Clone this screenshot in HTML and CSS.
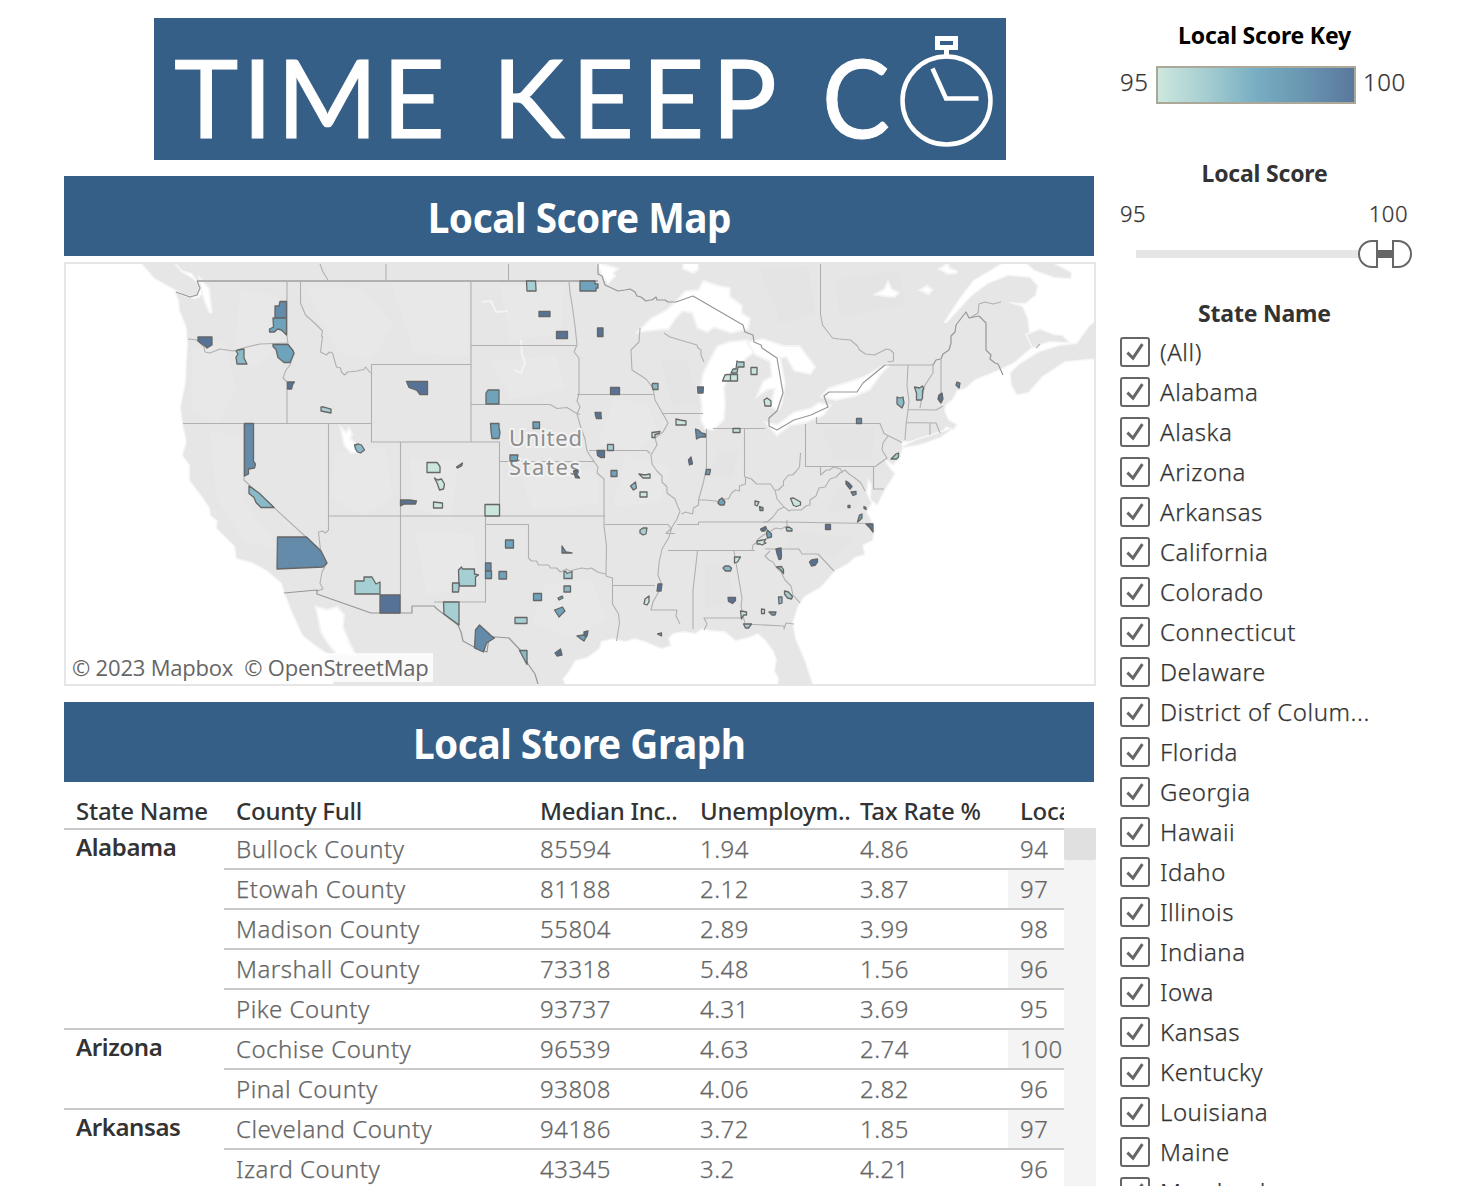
FILE: index.html
```html
<!DOCTYPE html>
<html lang="en">
<head>
<meta charset="utf-8">
<title>Time Keep Co – Local Scores</title>
<link rel="stylesheet" href="styles.css">
</head>
<body>
<svg class="defs" width="0" height="0" aria-hidden="true">
  <symbol id="check" viewBox="2 2 26 26"><path d="M7.400 15.600 L13 21.200 L22.400 7.200" fill="none" stroke="#666" stroke-width="3"/></symbol>
</svg>
<div class="page">
<main class="main">
  <header class="logo">
    <svg width="852" height="142" viewBox="154 18 852 142">
      <g class="logo-text">
        <text x="174" y="138" textLength="271" lengthAdjust="spacing">TIME</text>
        <text x="492" y="138" textLength="285" lengthAdjust="spacing">KEEP</text>
        <text x="822" y="138" textLength="68" lengthAdjust="spacingAndGlyphs">C</text>
      </g>
      <g fill="none" stroke="#fff">
        <circle cx="946.5" cy="100.500" r="44" stroke-width="4.500"/>
        <rect x="937.5" y="38.500" width="18" height="9" stroke-width="5"/>
        <path d="M946.500 48v7" stroke-width="5"/>
        <path d="M932.500 68.500L946 98.500h32.500" stroke-width="4.500"/>
      </g>
    </svg>
  </header>
  <h1 class="band"><span>Local Score Map</span></h1>
  <section class="map">
    <svg width="1028" height="420" viewBox="66 264 1028 420">
      <g class="land">
        <path d="M175 262L182 270L192 273L197 280L205 288L208 298L203 294L199 298L194 299L176 293L179 300L180 310L187 328L188 345L187 360L186 383L181 407L183 423L187 442L183 455L190 465L190 480L203 497L210 508L211 515L218 521L217 528L235 546L237 558L252 562L267 570L282 583L285 593L292 611L303 635L317 646L329 654L335 690H563L564 683L562 679L567 673L575 660L587 657L599 648L601 641L613 638L625 641L635 638L645 641L652 644L662 648L670 645L668 638L673 633L683 631L695 633L702 628L710 630L725 631L736 640L748 637L758 633L766 640L774 651L777 660L775 671L779 678L778 690H814L810 678L804 660L795 639L792 623L797 607L804 596L820 587L829 577L835 570L848 563L854 557L864 554L862 545L872 540L874 530L870 519L866 512L871 503L866 493L868 478L872 485L871 499L877 504L884 490L894 474L887 465L884 458L893 464L899 458L902 448L901 441L910 441L930 436L941 433L946 426L953 429L956 425L948 420L944 411L945 405L952 399L957 390L965 388L975 379L988 374L1000 369L1014 362L1033 346L1029 334L1027 318L1022 307L1007 302L1025 303L1035 295L1037 286L1030 278L1008 276L988 284L972 296L947 323L943 323L960 297L973 280L990 270L1003 262Z"/>
        <path d="M141 262H173L181 272L194 280L199 287L196 296L185 295L171 287L155 278Z"/>
        <path d="M1027 335L1040 330L1053 335L1062 336L1068 342L1050 341L1040 344L1033 347Z"/>
        <path d="M1011 373L1019 365L1040 352L1060 346L1077 344L1090 326L1096 322V358L1065 361L1042 376L1028 392L1017 394L1012 385Z"/>
        <path d="M1026 262H1050L1071 273L1070 278L1055 277L1035 270Z"/>
        <path d="M903 447L917 440L940 433L951 429L940 437L920 444Z"/>
      </g>
      <g class="relief">
        <path d="M240 288l38 9 3 43-27 29-20-18zM306 287l53 1 35 37-23 35-33-8zM192 350l32-9 12 49-16 31-28-8zM336 452l49-5 8 49-29 21-35-21zM391 281h77v75l-54-3zM210 430l40 11-7 58 35 49-33-5-29-45zM410 458l49 4-8 56-38-10zM500 285h64l-3 49-51 7zM490 361l66-5 9 33-54 10zM615 398l32 6 12 28-22 19-40-7zM520 475l78-5v34l-65 5zM415 530l59 5 5 56-53 3zM545 584l46-5 15 38-32 22-42-16zM626 455l45 13-12 34-46 5z"/>
        <path class="dark" d="M660 359l27 1 12 42-26 5zM718 451l20 2-6 24-23 1zM760 270l48-4 7 47-34 10zM835 280l65-10 5 35-65 13zM822 429l54-2-5 35-37-3zM839 487l22 4-4 18-31 3zM789 532l65 5-20 20-48-8zM705 565l24 2 5 36-29 5z"/>
      </g>
      <g class="water">
        <path d="M640 331L652 319L667 311L677 302L686 292L699 291L704 282L719 287L729 289L729 297L741 306L741 314L749 319L747 328L731 332L714 326L707 331L698 327L693 312L682 310L674 319L668 328L655 329Z"/>
        <path d="M747 341L729 343L718 347L709 364L704 374L701 392L703 406L702 420L706 428L713 429L723 419L724 404L723 387L728 376L738 365L746 357L755 350L748 346Z"/>
        <path d="M749 343L763 340L784 347L799 347L814 367L810 373L795 370L787 356L779 357L784 383L781 403L778 409L772 406L776 388L768 388L759 394L764 382L773 377L771 361L756 354Z"/>
        <path d="M768 424L777 426L795 413L812 409L819 404L829 406L823 414L804 422L790 424L777 434Z"/>
        <path d="M823 396L829 389L846 384L864 378L878 370L889 364L879 375L869 389L855 395L836 399Z"/>
        <path d="M201 281l7 8 3 24-4-8-4-12z"/>
        <path d="M317 608L327 611L337 608L343 615L342 627L349 644L354 654L337 653L329 643L322 632Z"/>
        <path d="M342 430l4 4 3-4 2 4-2 4 6 7 2 6-5 1-7-7z"/>
        <path d="M598 264l18 5-4 4 2 3-6 6-4-5zM684 264h13v5l-4 3-9-4zM941 269l6-4 2 4 8 3-9 1zM878 294l7-4 3-6 3 6 6 3-3 3-10-1zM922 290l5-3 4 3-3 3z"/>
      </g>
      <path class="rivers" d="M482 302l9-1 5 11 12-1M521 340l1 14 3 9-4 10-7-3"/>
      <g class="borders">
        <path d="M197 281H598" stroke-width="2"/>
        <path d="M386 264v17M508.500 264v17M320 264l3 8 5 8M287 281v55l1 8M188 339l9 1 7 7 1 5 5 1 10-4 13 2 14-4 13-3 28-1M288 344l6 9-4 12-4 5-3 8 4 4v41M183 423.500H371.500M300.500 281v22l5 12 9 8 8 8-1 5 1 1-2 15 6 3 3-3 3 1 4 14 4 1 1 4 3 3 3-3 10-1 3-1 3 0 2-3 5 6M371.500 364.500H471M371.500 364.500V442H499.500V516M471 281V442M471 345.500H577M471 404.500H550l7 4 10-1 8 5 5 2M569 281l1 12 2 11 3 22 2 19-3 7 5 6v36l-2 7 3 6-3 7 4 14 4 11 2 12 8 12 3 4-1 6 7 6v47l2.500 20-.500 30 6.500 2v26l6 10 1 9-3 18M577 394.500H654M640 328l-1 14-8 8 1 20 14 9 7 9 2 12 8 14 5 9-5 9-8 6 2 7-6 10 1 9 5 7 5 5 0 6 5 5 0 6 8 6 3 8 2 4-3 8-5 8-3 10-7 12-3 14-1 12 3 8-3 10-5 9-2 8h26l-1 6 4 8"/>
        <path d="M662 413.500H703M589 450.500H647l3 3M499.500 461.500H595M328.500 423.500V516H605M328.500 516v14l-3 3-3-2-4 1 2 18M244 423.500V480L320 550l7 13-5 9-2 11 3 6-6 2M400.500 442V613M485.500 516V602H434M485.500 524.500H528.500V558l3 3 5 0 2 4 10 0 2 3 6 0 4 4 6-3 3 2 12-3 6 1 4-1 6 4 8 2M605 524.500H668l3 4-5 5h9M613 585.500H655M668 550.500H755M677 524.500H698.500V522H780L872 523.500M697.500 551L693 590v39M734 551l8 47-1 8 4 18 39 2v3l2-6 8 1M704 630l3-6-3-6H742M664 333l6 4 27 8 1 3 3 2 0 5 3 7M706.500 429V467l-3 15-5 18 0 5-5 3-1 6-7-2-4 2M698.500 500h7l10 1 5 2 4-4 4 0 3-6 4-3 4 1 0-5 6-2 0-7 6 2 5 5 14 0 4 6 4 0 5-5 0-4 5-6 4 0 4-4 3-4 1-14"/>
        <path d="M744.500 428V477M713 428.500H765M805.500 424V466.500H876M816.500 417v6.500H880l4 10 18 9M888 436l-5 7-1 7 5 8-11 8M873.500 466.500V489H884M775 490l2 9 7 8-6 3-5 7-6 5-4 0M784 507l5 4 2-1 10 0 5-4 4-1 0-5 6-4 3-8 6-1 5-8 6-2 4-4 5-3 4 4 6 4 6 5 4 8M820.500 467v8l6-5 3 0 4-3 7 2 2 4M752 551l1-6 4-3 1-3 7-5 3 1 4-5 4-2 5 1 4-2 2-1 0-6M770 551l-5 5 4 4 4 2 3 5 5 5 4 8 6 6 2 9 7 8M765 549h34l3 5h16l16 17M885 365H933M908 365l-1 21 2 15-1 9-2 15-1 15M933 364v9l-8 12-3 12-2 11M941 360v40M908 409.500L936 410l7-4M906 422.500L936 423l4 10M930 423v12M820.500 264v50l2 11 10 13 6 1 12 1 7 6 2 4 6 4 9 1 4-2 8-4 4 1 3 3v8l-6 1M970 318l8-5 1-9 6-2 8 2 8-2M1036 348l4-4"/>
        <path class="nation" d="M176 292l14 5 7-2 3-7-3-7M598 264v10l4 2 3 9 13 6 7-1 5-1 5 3 2 4 4 1 5 4 4-1 2 0 4-3 1 3 8 0 3 2 8 0L693 296L743 325l2 7 8 3 1 7 7 3 1 3 15 10 6 35-6 18-8 7v8l8 4 17-10 17-5 17-8-4-11 5-4h28l6-9 22-18M933 365l3-5 5-1 2-5 6-4 2-7 0-7 4-4 1-7 10-13 3 6 10-2 7 7v27l5 5-1 4 5 4 3 1 5 11M284 593l33-3v4l54 19H412V606H434l3 3 21 16 3 7 2 9 11 6 13 5 2-15 7 0 13 1 12 13 7 13 7 10 3 10"/>
      </g>
      <g class="label">
        <text x="509" y="446" textLength="73">United</text>
        <text x="509" y="475" textLength="71">States</text>
      </g>
      <g class="c1">
        <path d="M198 337h14v8l-5 3-2-2-3-2-4-3zM287.500 382h7l-2 3-1 4h-4zM406.500 381.500H427.500V394.500H420l-3-4-8-3zM539 311.500h11v5h-11zM556.500 331.500h11v7h-11zM597.500 328h5.500v8.500h-5.500zM610.500 387.500h9v7h-9zM595 412.500h6v3l.500 3h-5l-1-3zM597 450.500h7.500v7h-4l-3-2zM697.500 387h6l-.500 6h-5zM691 457l1.500 7-3 1-1-5zM380 595H400V613H380zM400.500 500h9l7 1-1 3h-11l-4 2zM573.500 471l4-1-1 4 3 4-4-.500zM658 584h4l-1 7h-4zM776 549l5-1 .500 8-.500 3-2 .500-2-6zM809.500 562l2-2 6-1v3l-2 3-4 1zM825.500 524.500h5v5h-5zM866 524h7v8l-3-4zM846 481l3 2 3 3.500-2 2.500-4-5zM760.500 529l5-2.500 1 2-2 2.500h-3zM728 597.500h7.500v3l-3 3-4-2zM560.500 649l1.500 6-5 1-2-3zM584 632l4-1-1 5-3 3zM939 395l3-2 1 6-2 4-3-4z"/>
      </g>
      <g class="c2">
        <path d="M280 301.500h6.500V318H275V306l4 0zM244.500 423.500H253.500V461l2 3-1 4-6 1 0 5-4 2zM277.500 537H306.500L321 551l6 12-4 4-46 2zM475.500 630l4-5 12 11 3 2-8 5-3 9-9-4zM695.500 429l3 1 3 3 4 1v3h-5l-4 2zM485.500 563h5.500v8h-5.500zM562 546l4 6 6 1h-10zM456.500 467l3-2 3-2-1 3-4 2zM856.500 418.500h5v5h-5zM851 492l5-.500v3l-3 1zM848 505.500h2v2h-2zM864 506.500l2 1v2l-2-1zM957 382l3 1-1 5-3-3z"/>
      </g>
      <g class="c3">
        <path d="M273 318h13.500v17l-5-5-4-1-3 3h-5v-3l4-2zM273 344.500h15l5 6 1 3-4 9h-6l-6-5-2-8-3-3zM580 281h15v3l3 0v4h-2v3H580zM486 393l2-3h11V404H486zM490.500 423.500h8.500l0 4 1 5-1 6h-7l-1-7zM533 422h6.500v6.500H533zM510 455h8l-1 6h-7zM611 470.500h6v6h-6zM706.500 469.500h4l-1 5h-4zM719 500l3-2 3 4-1 3-4 0-2-2zM505.500 540h8v8h-8zM485.500 571h6v7.500h-6zM499 571.500h7.500v7.500H499zM533.500 593.500h8v7h-8zM558 598l4-2 1 2-4 2zM554.500 610l8-3 2.500 4-6 6zM577 636l7-1 2 2-2 4-3-2zM766.500 533l1-3 4 4v3l-4 1zM759.500 506.500l3.500 1v3h-3zM769 612h7l-1 3h-3zM859.500 515l2.500-1 0 4-3 3-1.500 1zM657.500 634l4-1v3z"/>
      </g>
      <g class="c4">
        <path d="M236 351l2-1 6-1v9l3 6h-10l-1-7 2-3zM354.500 445l4-1 3 1 3 5-4 3-3-1-2-3zM249 486l10 7 15 14.500H261l-5-5-2-5-5-4zM652.500 383.500h5.500v6h-5l-1-4zM897 397l3 1 3-1 1 6-2 5-5-4zM630.500 486l5-4 1 6-3 2zM564 586h6.500v6H564zM519.500 650.500h7.500v14zM723 568l2-2h4l2.500 2-1 3h-5zM778.500 597h3.500v6l-3 1z"/>
      </g>
      <g class="c5">
        <path d="M321 407l3 0 7 2v4l-10-2zM526.500 281h9l.500 8v2h-9zM737 361l2 1h5v5h-6l-1 6h-6l2-4h3zM914.500 387l5 1 3-2 1 2-1 3 0 7-1 2h-5l0-7zM607.500 444.500h6v6h-6zM355 581h9v-4h8l4 7 4-2v12H355zM458.500 570l3-3 1 2h12v5l4 1-3 2v9H459zM452.500 583h7l-1 9h-6zM443.500 602H459v23l-15-11zM564 571.500h2l1 2 5-2v7h-8zM515 617.500h12v6h-12zM640 530l3-2h4l-1 6-3 1-3-2zM776.500 567l5-.500 2 3v4l-3-4zM784.500 591l4 1 4 4.500-1 2.500-4-1-3-4zM743.500 624h8l-3 4h-3zM786 527.500l3-.500 3 2v2h-5zM891 459l5-5 2.500-1 0 4-2 2z"/>
      </g>
      <g class="c6">
        <path d="M427 462.500h10l3 4v6h-13zM434.500 478l3 2 4-1 3 5-1 5-4 1-2-6zM433.500 502l9 1v5h-9zM485 504.500h14.500V516H485zM676 419l4 1 6 1v4h-10zM652 432.500l8-1-1 2-4 1v3h-3zM733 428.500h7v4h-7zM725 375l2-.500h10.500v6.500h-15zM730.500 374v7M751 367.500h6v7h-6zM764 400l3-2 4 3v5h-6zM639 474l6 1 5-1v4h-7zM640 492h7v5h-7zM734.500 557h6l-3 5-3 1zM645 599l4-3v6l-2 3-3-1zM790.500 498.500l3-.500 7 4v3l-4 1.500-3-1zM755 501l4 1-1 2-1 2-2-1zM757 541l6-1 3-1-2 3 2 1-4 2-2-1h-3zM740.500 611l6 1v3h-3l-2 4zM761.500 609l3 .500v4h-3z"/>
      </g>
    </svg>
    <p class="credit">© 2023 Mapbox&nbsp; © OpenStreetMap</p>
  </section>
  <h2 class="band"><span>Local Store Graph</span></h2>
  <section class="table">
    <div class="grid">
      <div class="row head"><span>State Name</span><span>County Full</span><span>Median Inc..</span><span>Unemploym..</span><span>Tax Rate %</span><span>Loca</span></div>
      <div class="group"><b>Alabama</b><div>
        <div class="row"><span>Bullock County</span><span>85594</span><span>1.94</span><span>4.86</span><span>94</span></div>
        <div class="row alt"><span>Etowah County</span><span>81188</span><span>2.12</span><span>3.87</span><span>97</span></div>
        <div class="row"><span>Madison County</span><span>55804</span><span>2.89</span><span>3.99</span><span>98</span></div>
        <div class="row alt"><span>Marshall County</span><span>73318</span><span>5.48</span><span>1.56</span><span>96</span></div>
        <div class="row"><span>Pike County</span><span>93737</span><span>4.31</span><span>3.69</span><span>95</span></div>
      </div></div>
      <div class="group"><b>Arizona</b><div>
        <div class="row alt"><span>Cochise County</span><span>96539</span><span>4.63</span><span>2.74</span><span>100</span></div>
        <div class="row"><span>Pinal County</span><span>93808</span><span>4.06</span><span>2.82</span><span>96</span></div>
      </div></div>
      <div class="group"><b>Arkansas</b><div>
        <div class="row alt"><span>Cleveland County</span><span>94186</span><span>3.72</span><span>1.85</span><span>97</span></div>
        <div class="row"><span>Izard County</span><span>43345</span><span>3.2</span><span>4.21</span><span>96</span></div>
      </div></div>
    </div>
    <div class="scroll"><i></i></div>
  </section>
</main>
<aside class="side">
  <h3 class="key-title">Local Score Key</h3>
  <div class="key"><span>95</span><div class="ramp"></div><span>100</span></div>
  <h3 class="score-title">Local Score</h3>
  <div class="limits"><span>95</span><span>100</span></div>
  <div class="slider"><div class="track"></div><div class="knob left"></div><div class="bar"></div><div class="knob right"></div></div>
  <h3 class="state-title">State Name</h3>
  <ul class="states">
    <li><svg class="box"><use href="#check"/></svg><span>(All)</span></li>
    <li><svg class="box"><use href="#check"/></svg><span>Alabama</span></li>
    <li><svg class="box"><use href="#check"/></svg><span>Alaska</span></li>
    <li><svg class="box"><use href="#check"/></svg><span>Arizona</span></li>
    <li><svg class="box"><use href="#check"/></svg><span>Arkansas</span></li>
    <li><svg class="box"><use href="#check"/></svg><span>California</span></li>
    <li><svg class="box"><use href="#check"/></svg><span>Colorado</span></li>
    <li><svg class="box"><use href="#check"/></svg><span>Connecticut</span></li>
    <li><svg class="box"><use href="#check"/></svg><span>Delaware</span></li>
    <li><svg class="box"><use href="#check"/></svg><span>District of Colum...</span></li>
    <li><svg class="box"><use href="#check"/></svg><span>Florida</span></li>
    <li><svg class="box"><use href="#check"/></svg><span>Georgia</span></li>
    <li><svg class="box"><use href="#check"/></svg><span>Hawaii</span></li>
    <li><svg class="box"><use href="#check"/></svg><span>Idaho</span></li>
    <li><svg class="box"><use href="#check"/></svg><span>Illinois</span></li>
    <li><svg class="box"><use href="#check"/></svg><span>Indiana</span></li>
    <li><svg class="box"><use href="#check"/></svg><span>Iowa</span></li>
    <li><svg class="box"><use href="#check"/></svg><span>Kansas</span></li>
    <li><svg class="box"><use href="#check"/></svg><span>Kentucky</span></li>
    <li><svg class="box"><use href="#check"/></svg><span>Louisiana</span></li>
    <li><svg class="box"><use href="#check"/></svg><span>Maine</span></li>
    <li><svg class="box"><use href="#check"/></svg><span>Maryland</span></li>
  </ul>
</aside>
</div>
</body>
</html>
```
FILE: styles.css
```css
* { box-sizing: border-box; }
html, body { margin: 0; height: 1186px; overflow: hidden; background: #fff; }
body { font-family: "Noto Sans", "Open Sans", sans-serif; font-size: 24px; font-weight: 300; color: #333; }
h1, h2, h3, p, ul { margin: 0; padding: 0; }
svg { display: block; }
.defs { position: absolute; }
.page { display: flex; gap: 24px; width: 1480px; height: 1186px; padding-left: 64px; overflow: hidden; }
.main { width: 1032px; flex: none; padding-top: 18px; display: flex; flex-direction: column; }

.logo { width: 852px; height: 142px; flex: none; margin: 0 0 16px 90px; background: #365f87; }
.logo-text { font-family: Lato, sans-serif; font-size: 109px; font-weight: 400; fill: #fff; stroke: #fff; stroke-width: 1px; }

.band { width: 1030px; height: 80px; flex: none; background: #365f87; color: #fff; font-size: 42px; font-weight: 700; line-height: 81px; text-align: center; white-space: nowrap; letter-spacing: -.5px; }
.band span { display: inline-block; transform: scaleX(.923); }

.map { position: relative; height: 424px; flex: none; margin: 6px 0 16px; border: 2px solid #e6e6e6; background: #fff; overflow: hidden; }
.land path { fill: #e6e6e6; stroke: #f6f6f6; stroke-width: 3; paint-order: stroke; }
.relief path { fill: #eaeaea; opacity: .4; }
.relief .dark { fill: #e1e1e1; }
.water path { fill: #fff; stroke: #f4f4f4; stroke-width: 4; paint-order: stroke; }
.rivers { fill: none; stroke: #f3f3f3; stroke-width: 2; }
.borders path { fill: none; stroke: #b0b0b0; stroke-width: 1.1; stroke-linejoin: round; }
.borders path:first-child { stroke-width: 1.8; }
.borders .nation { stroke: #979797; stroke-width: 1.2; }
.label { font-size: 22px; font-weight: 400; fill: #8c8c8c; stroke: #f2f2f2; stroke-width: 4px; stroke-linejoin: round; paint-order: stroke; }
.c1, .c2, .c3, .c4, .c5, .c6 { stroke: #666; stroke-width: 1.3; stroke-linejoin: round; }
.c1 { fill: #567397; }
.c2 { fill: #648ba9; }
.c3 { fill: #6fa3bb; }
.c4 { fill: #8abac8; }
.c5 { fill: #a6cfd3; }
.c6 { fill: #cbe6de; }
.credit { position: absolute; left: 2px; bottom: 2px; width: 365px; height: 29px; padding-left: 4px; background: rgba(255, 255, 255, .8); color: #666; font: 400 22px/29px "Open Sans", sans-serif; letter-spacing: -.2px; white-space: nowrap; }

.table { display: flex; height: 404px; flex: none; }
.grid { width: 1000px; overflow: hidden; }
.row { display: grid; grid-template-columns: 304px 160px 160px 160px 56px; height: 40px; border-bottom: 2px solid #c9c9c9; line-height: 38px; color: #666; letter-spacing: .5px; -webkit-text-stroke: .25px #666; }
.row span { padding-left: 12px; white-space: nowrap; }
.row.head { grid-template-columns: 160px 304px 160px 160px 160px 56px; height: 48px; line-height: 57px; color: #333; font-weight: 500; letter-spacing: -.25px; -webkit-text-stroke: 0; }
.row span:last-child { overflow: hidden; }
.alt span:last-child { background: #f4f4f4; }
.group { display: grid; grid-template-columns: 160px 840px; }
.group b { padding-left: 12px; line-height: 33px; border-bottom: 2px solid #c9c9c9; color: #333; font-weight: 600; letter-spacing: -.4px; }
.scroll { width: 32px; margin-top: 46px; background: #f4f4f4; }
.scroll i { display: block; height: 32px; background: #e0e0e0; border-radius: 0 0 2px 2px; }

.side { width: 289px; flex: none; }
h3 { height: 40px; font-size: 23px; font-weight: 700; line-height: 38px; letter-spacing: -.2px; text-align: center; }
.key-title { margin-top: 16px; color: #000; }
.key { display: flex; align-items: center; margin-top: 10px; height: 38px; letter-spacing: .5px; -webkit-text-stroke: .25px #333; }
.key span { line-height: 32px; padding-bottom: 7px; }
.key span:first-child { width: 36px; }
.key span:last-child { margin-left: 7px; }
.ramp { width: 200px; height: 38px; border: 2px solid #aca899; background: linear-gradient(90deg, #cde7de, #a5cdd1 25%, #77aec2 50%, #6995b1 75%, #5a789c); }
.score-title { margin-top: 50px; }
.limits { display: flex; justify-content: space-between; height: 32px; margin-top: 3px; padding-right: 1px; font-size: 22px; line-height: 32px; letter-spacing: .5px; -webkit-text-stroke: .25px #333; }
.slider { display: flex; align-items: center; height: 28px; margin: 11px 0 0 16px; width: 276px; }
.track { width: 222px; height: 8px; background: #e6e6e6; }
.knob { width: 20px; height: 28px; border: 2px solid #666; background: #fff; }
.knob.left { border-radius: 14px 0 0 14px; }
.knob.right { border-radius: 0 14px 14px 0; }
.bar { width: 14px; height: 8px; background: #666; }
.state-title { margin-top: 26px; height: 38px; }
.states { list-style: none; letter-spacing: .55px; -webkit-text-stroke: .25px #333; }
.states li { display: flex; align-items: center; gap: 10px; height: 40px; white-space: nowrap; }
.states span { line-height: 30px; }
.box { width: 30px; height: 30px; flex: none; border: 2px solid #666; border-radius: 3px; }
```
